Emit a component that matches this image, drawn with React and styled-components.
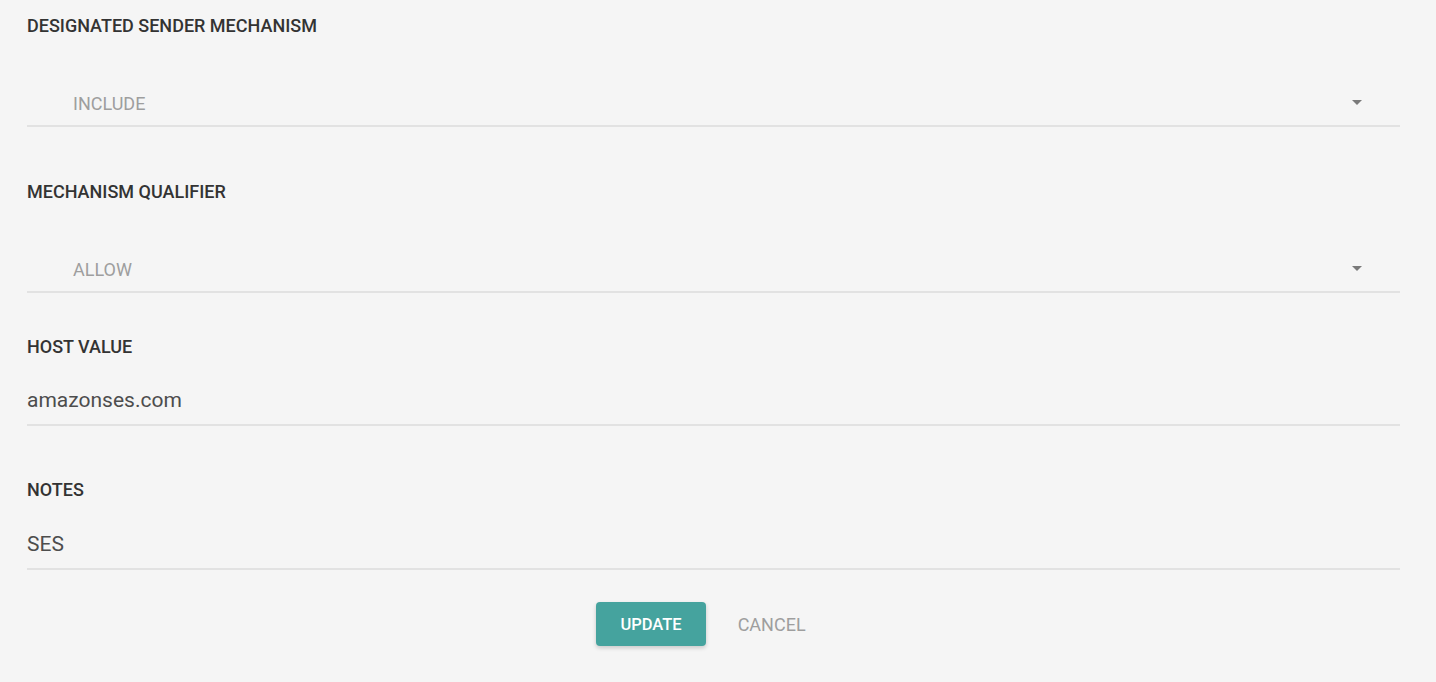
import React from 'react';
import styled, { createGlobalStyle } from 'styled-components';

const GlobalStyle = createGlobalStyle`
    html, body {
        margin: 0;
        padding: 0;
        background: #f5f5f5;
        font-family: Roboto, "Liberation Sans", sans-serif;
    }
`;

const Page = styled.div`
    min-height: 682px;
    background: #f5f5f5;
    padding: 16px 36px 0 27px;
    box-sizing: border-box;
`;

const Form = styled.form`
    display: flex;
    flex-direction: column;
`;

const Label = styled.label`
    display: block;
    margin-top: ${p => p.$gap || 0}px;
    font-size: 18px;
    line-height: 20px;
    font-weight: 500;
    color: #333;
    text-transform: uppercase;
`;

const SelectBox = styled.div`
    display: flex;
    align-items: center;
    justify-content: space-between;
    margin-top: 58px;
    padding: 0 38px 11px 46px;
    border-bottom: 2px solid #e2e2e2;
    cursor: pointer;
`;

const SelectValue = styled.span`
    font-size: 18px;
    line-height: 20px;
    color: #9e9e9e;
    text-transform: uppercase;
`;

const Arrow = styled.svg`
    display: block;
    width: 10px;
    height: 5px;
    fill: #7a7a7a;
    margin-top: -3px;
`;

const TextInput = styled.input`
    display: block;
    margin-top: ${p => p.$gap || 0}px;
    padding: 0 0 10px 0;
    height: 28px;
    box-sizing: content-box;
    border: none;
    border-bottom: 2px solid #e2e2e2;
    background: transparent;
    font-family: inherit;
    font-size: 21px;
    line-height: 28px;
    color: #4d4d4d;
    outline: none;
`;

const Actions = styled.div`
    display: flex;
    justify-content: center;
    align-items: center;
    gap: 16px;
    margin-top: 32px;
    padding-right: 9px;
`;

const Button = styled.button`
    height: 44px;
    padding: 0 ${p => (p.$variant === 'flat' ? 16 : 24)}px;
    border: none;
    border-radius: 4px;
    font-family: inherit;
    font-size: ${p => (p.$variant === 'flat' ? 18 : 16.5)}px;
    font-weight: ${p => (p.$variant === 'flat' ? 400 : 500)};
    text-transform: uppercase;
    cursor: pointer;
    background: ${p => (p.$variant === 'flat' ? 'transparent' : '#45a39e')};
    color: ${p => (p.$variant === 'flat' ? '#9e9e9e' : '#fff')};
    box-shadow: ${p => (p.$variant === 'flat' ? 'none' : '0 2px 4px rgba(0, 0, 0, 0.18)')};
`;

const Select = ({ value }) => (
    <SelectBox>
        <SelectValue>{value}</SelectValue>
        <Arrow viewBox="0 0 10 5">
            <path d="M0 0l5 5 5-5z" />
        </Arrow>
    </SelectBox>
);

const App = () => (
    <>
        <GlobalStyle />
        <Page>
            <Form onSubmit={e => e.preventDefault()}>
                <Label>Designated Sender Mechanism</Label>
                <Select value="Include" />

                <Label $gap={55}>Mechanism Qualifier</Label>
                <Select value="Allow" />

                <Label $gap={44}>Host Value</Label>
                <TextInput $gap={29} defaultValue="amazonses.com" />

                <Label $gap={54}>Notes</Label>
                <TextInput $gap={30} defaultValue="SES" />

                <Actions>
                    <Button type="submit">Update</Button>
                    <Button type="button" $variant="flat">Cancel</Button>
                </Actions>
            </Form>
        </Page>
    </>
);

export default App;
